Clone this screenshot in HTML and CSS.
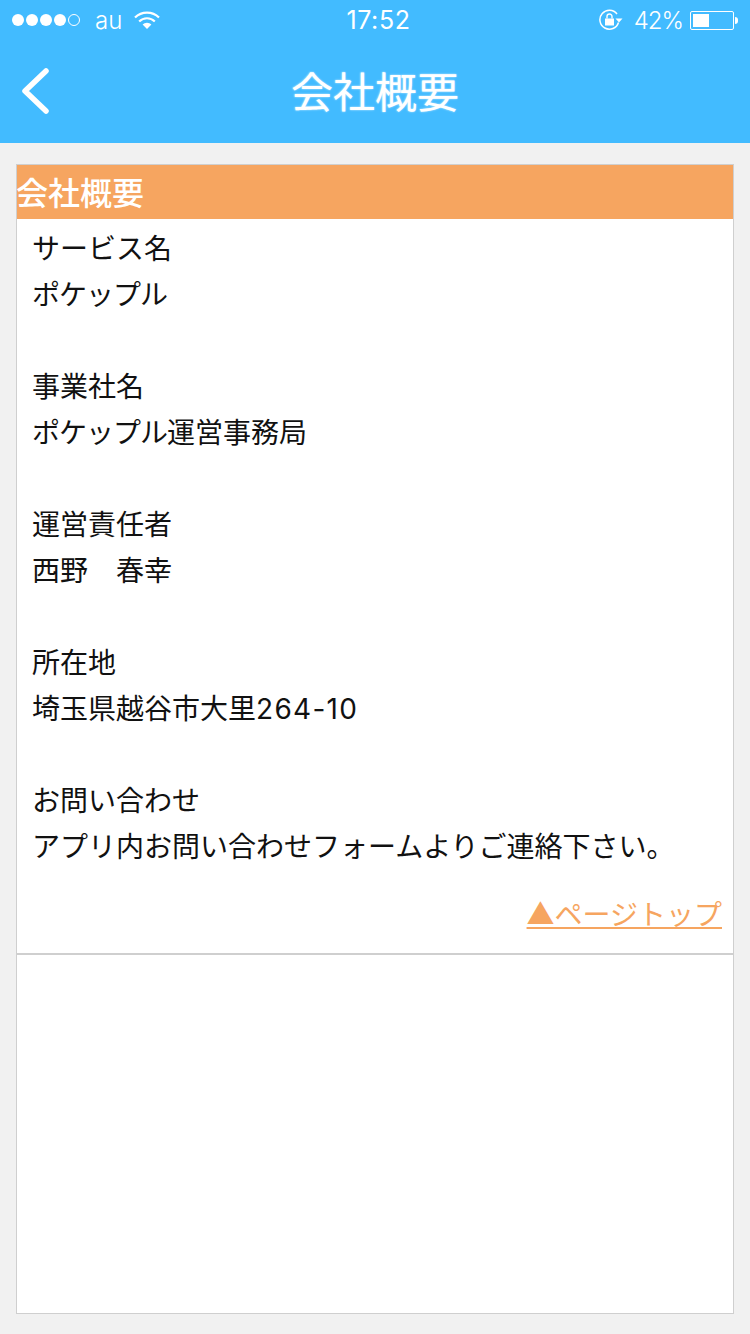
FILE: index.html
```html
<!DOCTYPE html>
<html lang="ja">
<head>
  <meta charset="UTF-8" />
  <title>会社概要</title>
  <link rel="stylesheet" href="styles.css">
</head>
<body>
  <header class="top">
    <div class="status">
      <div class="status-left">
        <span class="dots"><i></i><i></i><i></i><i></i><i class="off"></i></span>
        <span class="carrier">au</span>
        <svg class="wifi" width="26" height="20" viewBox="0 0 26 20">
          <path d="M1 7.5a17 17 0 0 1 24 0" fill="none" stroke="#fff" stroke-width="2.2"/>
          <path d="M5.2 11.5a11 11 0 0 1 15.6 0" fill="none" stroke="#fff" stroke-width="2.2"/>
          <path d="M8.6 14.6a6 6 0 0 1 8.8 0L13 19z" fill="#fff"/>
        </svg>
      </div>
      <div class="clock">17:52</div>
      <div class="status-right">
        <svg class="lock" width="24" height="22" viewBox="0 0 24 22">
          <path d="M19.5 13.5A9.5 9.5 0 1 1 18 5" fill="none" stroke="#fff" stroke-width="1.5"/>
          <path d="M16.5 9.5h7l-3.5 4z" fill="#fff"/>
          <rect x="6" y="9.5" width="9" height="7" fill="#fff"/>
          <path d="M8 9.5V7.5a2.5 2.5 0 0 1 5 0v2" fill="none" stroke="#fff" stroke-width="1.4"/>
        </svg>
        <span class="percent">42%</span>
        <span class="battery"><span class="battery-fill" style="width: 42%"></span></span>
        <span class="battery-tip"></span>
      </div>
    </div>
    <nav class="nav">
      <svg class="back" width="28" height="46" viewBox="0 0 28 46">
        <path d="M25 3L4 23l21 20" fill="none" stroke="#fff" stroke-width="5.5" stroke-linecap="round" stroke-linejoin="round"/>
      </svg>
      <h1>会社概要</h1>
    </nav>
  </header>

  <main class="card">
    <h2>会社概要</h2>
    <div class="info">
      <p>サービス名<br><span class="tight">ポケップル</span></p>
      <p>事業社名<br><span class="tight">ポケップル</span>運営事務局</p>
      <p>運営責任者<br>西野　春幸</p>
      <p>所在地<br>埼玉県越谷市大里<span class="num">264-10</span></p>
      <p>お問い合わせ<br>アプリ内お問い合わせフォームよりご連絡下さい。</p>
    </div>
    <div class="pagetop"><a href="#">▲ページトップ</a></div>
  </main>
</body>
</html>
```

FILE: styles.css
```css
* {
  margin: 0;
  padding: 0;
  box-sizing: border-box;
}

body {
  width: 750px;
  height: 1334px;
  background-color: #f1f1f1;
  color: #111111;
  font-family: "Noto Sans CJK JP", "Liberation Sans", sans-serif;
  overflow: hidden;
}

/* Blue header */
.top {
  height: 143px;
  background-color: #42bbff;
  color: #ffffff;
}

.status {
  height: 40px;
  padding: 0 12px;
  display: grid;
  grid-template-columns: 1fr auto 1fr;
  align-items: center;
  font-family: Inter, "Liberation Sans", sans-serif;
  font-size: 24px;
}

.status-left,
.status-right {
  display: flex;
  align-items: center;
}

.status-right {
  justify-content: flex-end;
}

.dots {
  display: flex;
  gap: 2px;
}

.dots i {
  width: 12px;
  height: 12px;
  border-radius: 50%;
  background-color: #ffffff;
}

.dots i.off {
  background: none;
  border: 1px solid #ffffff;
}

.carrier {
  margin-left: 15px;
  font-weight: 300;
}

.wifi {
  margin-left: 12px;
}

.clock {
  font-size: 25px;
  font-weight: 400;
  letter-spacing: 0.6px;
  margin-left: 7px;
}

.lock {
  margin-right: 11px;
}

.percent {
  font-weight: 300;
  letter-spacing: -1px;
  margin-right: 7px;
}

.battery {
  width: 44px;
  height: 19px;
  padding: 2px;
  border: 1px solid #ffffff;
  border-radius: 2px;
}

.battery-fill {
  display: block;
  height: 100%;
  background-color: #ffffff;
}

.battery-tip {
  width: 3px;
  height: 7px;
  margin-left: 1px;
  background-color: #ffffff;
  border-radius: 0 3px 3px 0;
}

.nav {
  height: 103px;
  display: flex;
  align-items: center;
  justify-content: center;
  position: relative;
}

.back {
  position: absolute;
  left: 21px;
  top: 28px;
}

.nav h1 {
  margin-top: -3px;
  font-size: 42px;
  font-weight: 400;
  line-height: 1;
  text-shadow: 0 0 2px rgba(255, 255, 255, 0.8);
}

/* Card */
.card {
  height: 1150px;
  margin: 21px 16px 0;
  background-color: #ffffff;
  border: 1px solid #cfcfcf;
}

.card h2 {
  height: 54px;
  background-color: #f6a560;
  color: #ffffff;
  font-size: 32px;
  font-weight: 500;
  line-height: 52px;
  text-indent: -1px;
}

.info {
  padding: 7px 15px 0;
  font-family: Inter, "Noto Sans CJK JP", sans-serif;
  font-size: 28px;
  line-height: 46px;
}

.info p {
  margin-bottom: 46px;
}

.info p:last-child {
  margin-bottom: 0;
}

.tight {
  letter-spacing: -1px;
}

.num {
  letter-spacing: 1.3px;
}

.pagetop {
  margin-top: 23px;
  padding: 0 11px 19px 0;
  text-align: right;
  font-size: 28px;
  line-height: 41px;
  border-bottom: 2px solid #cfcfcf;
}

.pagetop a {
  color: #f6a560;
}
```
